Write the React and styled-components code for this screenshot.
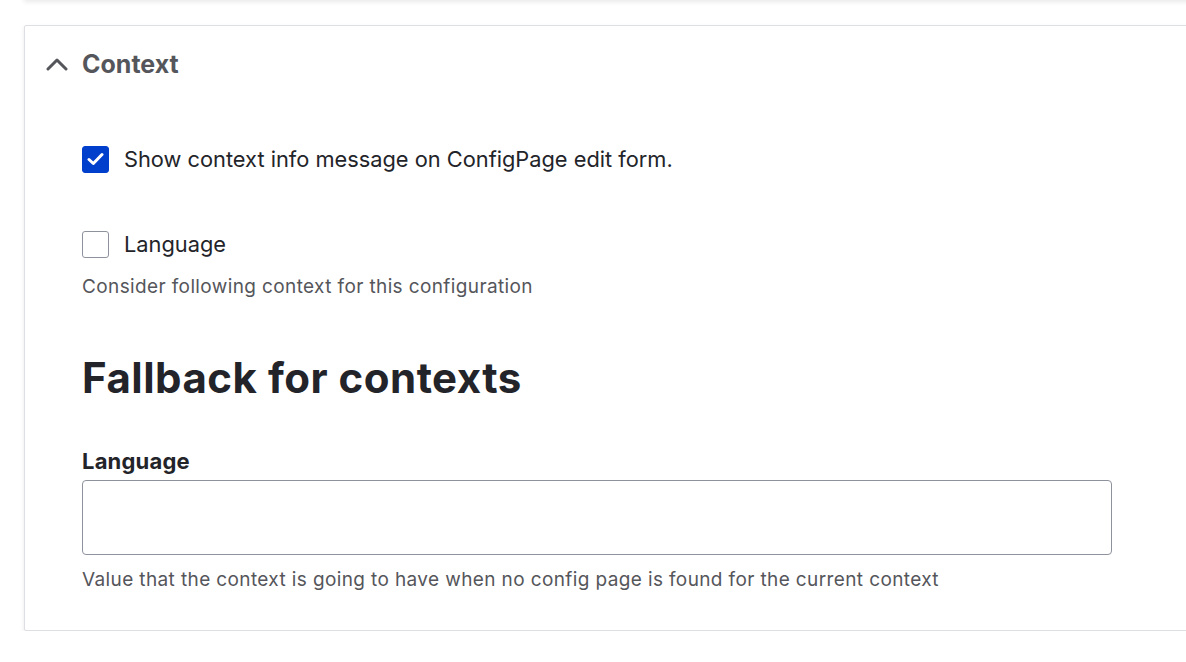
import React from "react";
import styled, { createGlobalStyle } from "styled-components";

const Global = createGlobalStyle`
  html, body {
    margin: 0;
    padding: 0;
    background: #ffffff;
    overflow: hidden;
  }
  body {
    font-family: Inter, "Noto Sans", "Liberation Sans", sans-serif;
    color: #232429;
  }
`;

const Page = styled.div`
  padding: 0 0 0 24px;
`;

const PrevCard = styled.div`
  height: 10px;
  margin-top: -10px;
  margin-right: -20px;
  background: #fff;
  box-shadow: 0 2px 5px rgba(0, 0, 0, 0.09);
`;

const Card = styled.details`
  margin-top: 25px;
  margin-right: -20px;
  border: 1px solid #dedfe4;
  border-radius: 2px;
  background: #fff;
  box-shadow: 0 2px 4px rgba(0, 0, 0, 0.09);
`;

const Summary = styled.summary`
  list-style: none;
  display: flex;
  align-items: center;
  gap: 14px;
  padding: 23px 21px 0;
  height: 30px;
  font-size: 25px;
  font-weight: 700;
  color: #55565b;
  cursor: pointer;
  &::-webkit-details-marker { display: none; }
`;

const Body = styled.div`
  padding: 66px 0 37px 57px;
  display: flex;
  flex-direction: column;
`;

const CheckRow = styled.label`
  display: flex;
  align-items: center;
  gap: 15px;
  font-size: 21.8px;
  line-height: 28px;
  color: #232429;
  margin-top: ${(p) => p.$top || 0}px;
`;

const Box = styled.span`
  width: 27px;
  height: 27px;
  box-sizing: border-box;
  border-radius: 3px;
  flex: none;
  display: flex;
  align-items: center;
  justify-content: center;
  background: ${(p) => (p.$checked ? "#003ecc" : "#fff")};
  border: 1px solid ${(p) => (p.$checked ? "#003ecc" : "#8e929c")};
`;

const Description = styled.div`
  font-size: 19px;
  line-height: 26px;
  letter-spacing: 0.38px;
  color: #55565b;
  margin-top: ${(p) => p.$top || 0}px;
`;

const Heading = styled.h2`
  margin: 53px 0 0;
  font-size: 42px;
  line-height: 50px;
  font-weight: 700;
  color: #232429;
  letter-spacing: 0.5px;
`;

const Label = styled.div`
  margin-top: 44px;
  font-size: 22px;
  line-height: 28px;
  font-weight: 700;
  letter-spacing: 0.2px;
  color: #232429;
`;

const Input = styled.input`
  margin-top: 5px;
  width: 1030px;
  height: 75px;
  box-sizing: border-box;
  border: 1px solid #8e929c;
  border-radius: 4px;
  font: inherit;
  font-size: 22px;
  padding: 0 16px;
  outline: none;
  background: #fff;
`;

function Chevron() {
  return (
    <svg width="22" height="14" viewBox="0 0 22 14" fill="none">
      <path d="M2 12 L11 3 L20 12" stroke="#55565b" strokeWidth="3" strokeLinecap="round" strokeLinejoin="round" />
    </svg>
  );
}

function Check() {
  return (
    <svg width="17" height="14" viewBox="0 0 17 14" fill="none">
      <path d="M2 7.5 L6.3 11.5 L15 2.5" stroke="#fff" strokeWidth="3" strokeLinecap="round" strokeLinejoin="round" />
    </svg>
  );
}

export default function App() {
  return (
    <Page>
      <Global />
      <PrevCard />
      <Card open>
        <Summary>
          <Chevron />
          Context
        </Summary>
        <Body>
          <CheckRow>
            <Box $checked>
              <Check />
            </Box>
            Show context info message on ConfigPage edit form.
          </CheckRow>
          <CheckRow $top={57}>
            <Box />
            Language
          </CheckRow>
          <Description $top={16}>Consider following context for this configuration</Description>
          <Heading>Fallback for contexts</Heading>
          <Label>Language</Label>
          <Input type="text" />
          <Description $top={12}>
            Value that the context is going to have when no config page is found for the current context
          </Description>
        </Body>
      </Card>
    </Page>
  );
}
